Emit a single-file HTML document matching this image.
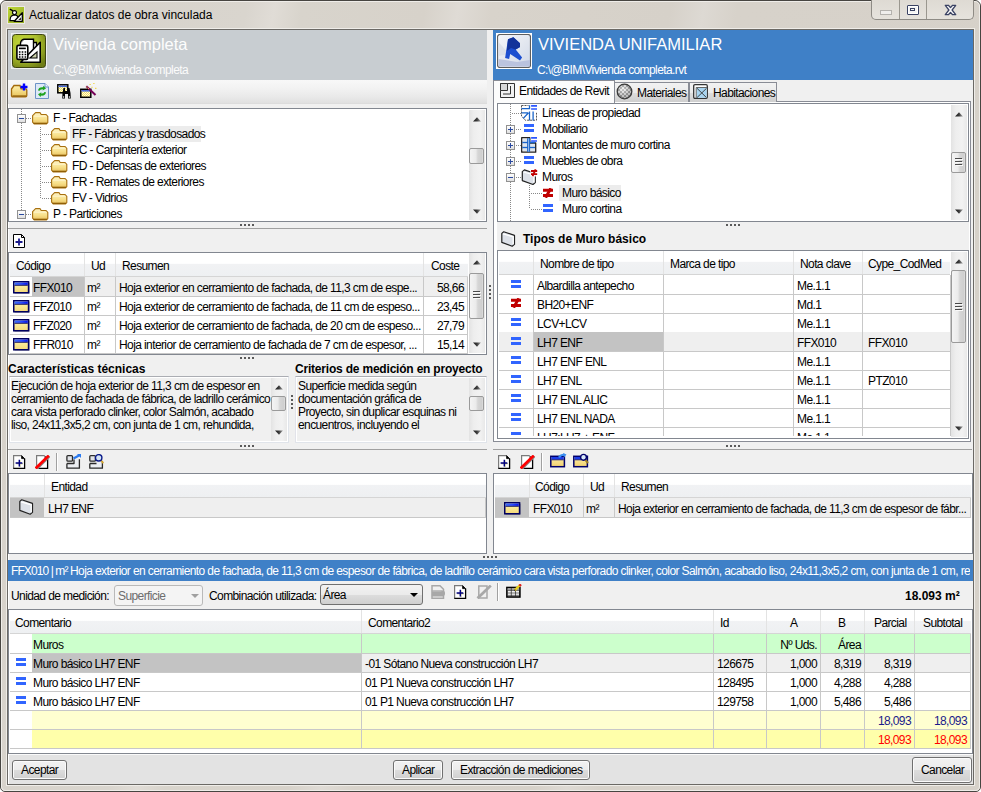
<!DOCTYPE html>
<html><head><meta charset="utf-8">
<style>
*{box-sizing:border-box;margin:0;padding:0}
html,body{width:981px;height:792px;overflow:hidden;background:#fff}
body{font-family:"Liberation Sans",sans-serif;font-size:12px;color:#000;position:relative;letter-spacing:-0.6px;line-height:14px}
.a{position:absolute}
.t{position:absolute;white-space:pre;line-height:14px;height:14px}
.b{font-weight:bold;letter-spacing:-0.15px}
.r{text-align:right}
.box{position:absolute;background:#fff;border:1px solid #828790}
.hl{position:absolute;height:1px}
.vl{position:absolute;width:1px}
.gh{position:absolute;background:linear-gradient(#fff 0,#fff 45%,#f1f2f4 50%,#eef0f2 100%)}
.sb{position:absolute;background:linear-gradient(90deg,#e3e3e3,#eeeeee 30%,#f2f2f2 70%,#e8e8e8)}
.th{position:absolute;border:1px solid #9a9a9a;border-radius:2px;background:linear-gradient(90deg,#f4f4f4,#ebebeb 45%,#d6d6d6 60%,#cfcfcf 90%,#e0e0e0)}
.up{position:absolute;width:0;height:0;border-left:4px solid transparent;border-right:4px solid transparent;border-bottom:4px solid #404040}
.dn{position:absolute;width:0;height:0;border-left:4px solid transparent;border-right:4px solid transparent;border-top:4px solid #404040}
.dots{position:absolute;height:2px;background:repeating-linear-gradient(90deg,#5a5a5a 0 2px,transparent 2px 4px)}
.vdots{position:absolute;width:2px;background:repeating-linear-gradient(#5a5a5a 0 2px,transparent 2px 4px)}
.btn{position:absolute;border:1px solid #707070;border-radius:3px;background:linear-gradient(#f2f2f2 0,#ebebeb 50%,#dddddd 51%,#cfcfcf 100%);box-shadow:inset 0 0 0 1px #fbfbfb}
.eq{position:absolute;width:10px;height:8px;border-top:3px solid #3165ff;border-bottom:3px solid #3165ff}
</style></head><body>
<!-- window frame -->
<div class="a" style="left:0;top:0;width:981px;height:792px;border:1px solid #474541;border-radius:6px 6px 5px 5px;background:#d7d2cb"></div>
<div class="a" style="left:1px;top:1px;width:979px;height:790px;border:1px solid #efede9;border-radius:5px 5px 4px 4px;background:linear-gradient(100deg,#d6d1c9 0,#d9d5ce 22%,#e0dcd6 24.5%,#d8d4cc 27%,#d7d2ca 38%,#dfdbd5 41%,#d8d3cb 44%,#d6d1c9 60%,#ddd9d3 63%,#d7d2ca 66%,#d6d1c9 100%)"></div>
<div class="t" style="left:29px;top:8px;letter-spacing:0;color:#000">Actualizar datos de obra vinculada</div>
<div class="a" style="left:6px;top:28px;width:969px;height:758px;border:1px solid #efede9"></div><div class="a" style="left:7px;top:29px;width:967px;height:756px;background:#f0f0f0;border:1px solid #6b6965"></div><div class="a" style="left:8px;top:30px;width:965px;height:754px;border-left:1px solid #fff;border-bottom:1px solid #fff"></div>
<!-- caption buttons -->
<div class="a" style="left:871px;top:0;width:103px;height:20px;border:1px solid #8e8b85;border-top:none;border-radius:0 0 5px 5px;background:linear-gradient(#dedad3,#e6e3dd)"></div>
<div class="vl" style="left:899px;top:0;height:19px;background:#9a978f"></div>
<div class="vl" style="left:926px;top:0;height:19px;background:#9a978f"></div>
<div class="a" style="left:880px;top:10px;width:12px;height:5px;border:1px solid #b4b2ae;background:#efeeec"></div>
<div class="a" style="left:907px;top:5px;width:12px;height:10px;border:1.5px solid #3a4263;border-radius:1px;background:#f4f4f4;box-shadow:inset 0 0 0 1px #fff"><div class="a" style="left:2px;top:2px;width:5px;height:3px;border:1.3px solid #3a4263"></div></div>
<svg class="a" style="left:944px;top:4px" width="13" height="12" viewBox="0 0 13 12"><path d="M1.3 1.3 H4.4 L6.5 3.6 L8.6 1.3 H11.7 L8.1 6 L11.7 10.7 H8.6 L6.5 8.4 L4.4 10.7 H1.3 L4.9 6Z" fill="#fafafa" stroke="#3a4263" stroke-width="1.3" stroke-linejoin="round"/></svg>
<!-- title icon -->
<div class="a" style="left:7px;top:6px;width:18px;height:18px;border:1px solid #ebe8e3"></div><svg class="a" style="left:8px;top:7px" width="16" height="16" viewBox="0 0 16 16"><defs><linearGradient id="tg" x1="0" y1="0" x2="1" y2="1"><stop offset="0" stop-color="#c0d83a"/><stop offset="1" stop-color="#93aa22"/></linearGradient></defs><rect x="0" y="0" width="16" height="16" fill="url(#tg)"/><path d="M1.8 2.2 L5 3.8" stroke="#000" stroke-width="1.3"/><path d="M2 13.6 L2.4 10.6 Q3 8.4 5.5 8.1 L7.8 8.1 Q9.4 8.5 9.8 10.2 L8.6 13.6Z" fill="#fff" stroke="#000" stroke-width="1.1"/><circle cx="6.5" cy="5.6" r="2" fill="#fff" stroke="#000" stroke-width="1.1"/><path d="M14.3 5.8 L14.3 14.3 L6.2 14.3Z" fill="#fff" stroke="#000" stroke-width="1.3" stroke-linejoin="round"/><path d="M13 10.2 L13 13 L10.2 13Z" fill="#333"/></svg>

<!-- LEFT HEADER -->
<div class="a" style="left:8px;top:30px;width:479px;height:50px;background:#c8cdd1"></div>
<div class="a" style="left:11px;top:33px;width:36px;height:36px;border:1px solid #eef0f2;background:#d3d8db"></div>
<svg class="a" style="left:12px;top:34px" width="34" height="34" viewBox="0 0 34 34">
<defs><radialGradient id="lg1" cx="0.35" cy="0.3" r="0.8"><stop offset="0" stop-color="#c8dc3c"/><stop offset="0.55" stop-color="#a9bd2c"/><stop offset="1" stop-color="#6f7d16"/></radialGradient></defs>
<rect x="0.5" y="0.5" width="33" height="33" rx="3" fill="url(#lg1)" stroke="#3d4410"/>
<path d="M11 8.5 L24.5 8.5 L24.5 25 L11 25Z" fill="#f2f2f2" stroke="#000" stroke-width="1.3"/>
<path d="M8.5 9 Q9 6 12 5.3 L21.5 5.3 L21.5 24 L8.5 24Z" fill="#fff" stroke="#000" stroke-width="1.4"/>
<path d="M11 6.5 Q10 7 9.8 8.5" stroke="#888" stroke-width="0.8" fill="none"/>
<path d="M28.2 8.3 L28.2 28.2 L8.7 28.2Z" fill="#fff" stroke="#000" stroke-width="1.6" stroke-linejoin="round"/>
<path d="M17.9 24 L25 17.9 L25 24Z" fill="#c9cfa8" stroke="#000" stroke-width="1.1"/>
<rect x="4.9" y="11.4" width="10.9" height="14" rx="1.5" fill="#fff" stroke="#000" stroke-width="1.6"/>
<rect x="7" y="13.6" width="6.8" height="1.6" fill="#000"/>
<path d="M6.9 18h1.6M9.7 18h1.6M12.6 18h1.6M6.9 20.6h1.6M9.7 20.6h1.6M12.6 20.6h1.6M6.9 23h1.6M9.7 23h1.6M12.6 23h1.6" stroke="#000" stroke-width="1.5"/>
</svg>
<div class="t" style="left:53px;top:34px;font-size:16.5px;line-height:20px;height:20px;letter-spacing:0;color:#fdfdfd">Vivienda completa</div>
<div class="t" style="left:53px;top:63px;color:#fbfbfb">C:\@BIM\Vivienda completa</div>

<!-- RIGHT HEADER -->
<div class="a" style="left:493px;top:30px;width:480px;height:50px;background:#3f80c7"></div>
<div class="a" style="left:496px;top:33px;width:36px;height:36px;background:#fff"></div>
<svg class="a" style="left:497px;top:34px" width="34" height="34" viewBox="0 0 34 34">
<defs><linearGradient id="rg1" x1="0" y1="0" x2="1" y2="1"><stop offset="0" stop-color="#f4f6fa"/><stop offset="0.5" stop-color="#e4e8f0"/><stop offset="1" stop-color="#d0d8e8"/></linearGradient></defs>
<rect x="0.5" y="0.5" width="33" height="33" rx="2.5" fill="url(#rg1)" stroke="#5f5f5f" stroke-width="1.2"/>
<path d="M1.5 25 L20 28 L33 26 L33 32.5 L1.5 32.5Z" fill="#b4bddc" opacity="0.85"/>
<path d="M1.5 8 L12 20 L1.5 22Z" fill="#d6dbe6" opacity="0.7"/>
<path d="M11 5.3 L16.4 3.2 L23 9.3 L23 13 L18.7 15.6 L25.1 23.6 L23 26.5 L13.2 20.1 L12.1 24.9 L8.1 24.1Z" fill="#1d4fd0"/>
<path d="M11 5.3 L16.4 3.2 L23 9.3 L23 13 L18.7 15.6 L14 14 L9.8 17Z" fill="#13339a"/>
</svg>
<div class="t" style="left:538px;top:34px;font-size:16.5px;line-height:20px;height:20px;letter-spacing:0;color:#fff">VIVIENDA UNIFAMILIAR</div>
<div class="t" style="left:537px;top:63px;color:#fff">C:\@BIM\Vivienda completa.rvt</div>
<!-- LEFT TOOLBAR -->
<div class="a" style="left:8px;top:80px;width:479px;height:24px;background:linear-gradient(#f8f8f8,#f2f2f2 35%,#e9e9e9 70%,#dedede 100%)"></div>
<div class="hl" style="left:8px;top:103px;width:479px;background:#dcdcdc"></div>
<!-- folder + -->
<svg class="a" style="left:10px;top:83px" width="18" height="15" viewBox="0 0 18 15">
<defs><linearGradient id="fg1" x1="0" y1="0" x2="0" y2="1"><stop offset="0" stop-color="#fff2b0"/><stop offset="1" stop-color="#e9c45a"/></linearGradient></defs>
<path d="M1.5 6 L4 2.5 L10 2.5 L11 5.8 L15.5 5.8 Q16.8 5.8 16.8 7 L16.8 12.5 Q16.8 13.8 15.5 13.8 L2.8 13.8 Q1.5 13.8 1.5 12.5Z" fill="url(#fg1)" stroke="#a46b0c" stroke-width="1.3"/>
<path d="M2.5 13 H16" stroke="#8a5a08" stroke-width="1.2"/>
<path d="M14 0.5 V7.5 M10.5 4 H17.5" stroke="#0000ff" stroke-width="2.4"/>
</svg>
<!-- refresh doc -->
<svg class="a" style="left:35px;top:83px" width="14" height="16" viewBox="0 0 14 16">
<path d="M0.5 0.5 H10 L13.5 4 V15.5 H0.5Z" fill="#dde9f7" stroke="#6d93c6"/>
<path d="M10 0.5 V4 H13.5" fill="#f4f8fd" stroke="#6d93c6"/>
<path d="M3 7.5 Q3.5 3.8 8 4.2 L8.5 2.8 L11 5.6 L7.6 7.6 L7.9 6.2 Q5 6 4.6 7.8Z" fill="#1ea31e"/>
<path d="M11 9.2 Q10.5 13 6 12.6 L5.5 14 L3 11.2 L6.4 9.2 L6.1 10.6 Q9 10.8 9.4 9Z" fill="#1ea31e"/>
</svg>
<!-- binoculars window -->
<svg class="a" style="left:57px;top:84px" width="17" height="15" viewBox="0 0 17 15">
<defs><pattern id="chk" width="2" height="2" patternUnits="userSpaceOnUse"><rect width="2" height="2" fill="#fffbe0"/><rect width="1" height="1" fill="#f4e060"/><rect x="1" y="1" width="1" height="1" fill="#f4e060"/></pattern></defs>
<rect x="0.8" y="0.8" width="10" height="8" fill="url(#chk)" stroke="#000" stroke-width="1.5"/>
<rect x="1.5" y="1.5" width="8.6" height="1.6" fill="#4a6ad8"/>
<path d="M5.5 9 L6.5 4 L8 4 L8 14.5 L5.2 14.5Z M13.5 9 L12.5 4 L11 4 L11 14.5 L13.8 14.5Z M8 7 H11 V10 H8Z" fill="#000"/>
<circle cx="6.6" cy="13" r="0.8" fill="#fff"/><circle cx="12.4" cy="13" r="0.8" fill="#fff"/>
</svg>
<!-- window + wand -->
<svg class="a" style="left:80px;top:82px" width="17" height="16" viewBox="0 0 17 16">
<rect x="0.8" y="7.3" width="10" height="8" fill="url(#chk)" stroke="#000" stroke-width="1.5"/>
<rect x="1.5" y="8" width="8.6" height="1.6" fill="#4a6ad8"/>
<path d="M6.3 4.3 L15.5 13" stroke="#760058" stroke-width="2"/>
<circle cx="7" cy="5" r="0.6" fill="#f8e040"/><circle cx="8.4" cy="6.3" r="0.6" fill="#f8e040"/>
<path d="M9.6 2.5 h1 M10.1 2 v1 M13.4 1.5 h1 M13.9 1 v1 M11.5 5.3 h1 M12 4.8 v1 M15.3 6.4 h1 M15.8 5.9 v1" stroke="#f0d020" stroke-width="1.1"/>
</svg>
<svg width="0" height="0" style="position:absolute"><defs><linearGradient id="fdg" x1="0" y1="0" x2="0" y2="1"><stop offset="0" stop-color="#fff6c8"/><stop offset="0.6" stop-color="#f7df88"/><stop offset="1" stop-color="#e8c060"/></linearGradient></defs></svg>
<!-- LEFT TREE -->
<div class="box" style="left:8px;top:108px;width:479px;height:114px"></div>

<!-- tree lines -->
<div class="vdots" style="left:21px;top:109px;width:1px;height:105px;background:repeating-linear-gradient(#888 0 1px,transparent 1px 2px)"></div>
<div class="vdots" style="left:40px;top:127px;width:1px;height:71px;background:repeating-linear-gradient(#888 0 1px,transparent 1px 2px)"></div>
<div class="dots" style="left:26px;top:118px;width:6px;height:1px;background:repeating-linear-gradient(90deg,#888 0 1px,transparent 1px 2px)"></div>
<div class="dots" style="left:26px;top:214px;width:6px;height:1px;background:repeating-linear-gradient(90deg,#888 0 1px,transparent 1px 2px)"></div>
<div class="dots" style="left:42px;top:134px;width:9px;height:1px;background:repeating-linear-gradient(90deg,#888 0 1px,transparent 1px 2px)"></div>
<div class="dots" style="left:42px;top:150px;width:9px;height:1px;background:repeating-linear-gradient(90deg,#888 0 1px,transparent 1px 2px)"></div>
<div class="dots" style="left:42px;top:166px;width:9px;height:1px;background:repeating-linear-gradient(90deg,#888 0 1px,transparent 1px 2px)"></div>
<div class="dots" style="left:42px;top:182px;width:9px;height:1px;background:repeating-linear-gradient(90deg,#888 0 1px,transparent 1px 2px)"></div>
<div class="dots" style="left:42px;top:198px;width:9px;height:1px;background:repeating-linear-gradient(90deg,#888 0 1px,transparent 1px 2px)"></div>
<div class="a" style="left:17px;top:114px;width:9px;height:9px;border:1px solid #919191;background:linear-gradient(#fff,#e0e0e0)"><div class="a" style="left:1px;top:3px;width:5px;height:1px;background:#2a4aa0"></div></div>
<div class="a" style="left:17px;top:210px;width:9px;height:9px;border:1px solid #919191;background:linear-gradient(#fff,#e0e0e0)"><div class="a" style="left:1px;top:3px;width:5px;height:1px;background:#2a4aa0"></div></div>
<div class="a" style="left:70px;top:126px;width:131px;height:16px;background:#ececec"></div>
<svg class="a" style="left:32px;top:112px" width="17" height="13" viewBox="0 0 17 13"><path d="M3.6 0.6 H8 L9.2 2.5 H13.9 L15.8 4.3 V10.6 L14.5 12 H2.2 L0.6 10.2 V3.6Z" fill="url(#fdg)" stroke="#a87010" stroke-width="1.1" stroke-linejoin="round"/><path d="M1.5 11.3 H15" stroke="#8a5800" stroke-width="1.2"/><path d="M2 4.2 H14.8" stroke="#fff8d8" stroke-width="0.8"/></svg>
<div class="t" style="left:53px;top:111px">F - Fachadas</div>
<svg class="a" style="left:51px;top:128px" width="17" height="13" viewBox="0 0 17 13"><path d="M3.6 0.6 H8 L9.2 2.5 H13.9 L15.8 4.3 V10.6 L14.5 12 H2.2 L0.6 10.2 V3.6Z" fill="url(#fdg)" stroke="#a87010" stroke-width="1.1" stroke-linejoin="round"/><path d="M1.5 11.3 H15" stroke="#8a5800" stroke-width="1.2"/><path d="M2 4.2 H14.8" stroke="#fff8d8" stroke-width="0.8"/></svg>
<div class="t" style="left:72px;top:127px">FF - Fábricas y trasdosados</div>
<svg class="a" style="left:51px;top:144px" width="17" height="13" viewBox="0 0 17 13"><path d="M3.6 0.6 H8 L9.2 2.5 H13.9 L15.8 4.3 V10.6 L14.5 12 H2.2 L0.6 10.2 V3.6Z" fill="url(#fdg)" stroke="#a87010" stroke-width="1.1" stroke-linejoin="round"/><path d="M1.5 11.3 H15" stroke="#8a5800" stroke-width="1.2"/><path d="M2 4.2 H14.8" stroke="#fff8d8" stroke-width="0.8"/></svg>
<div class="t" style="left:72px;top:143px">FC - Carpintería exterior</div>
<svg class="a" style="left:51px;top:160px" width="17" height="13" viewBox="0 0 17 13"><path d="M3.6 0.6 H8 L9.2 2.5 H13.9 L15.8 4.3 V10.6 L14.5 12 H2.2 L0.6 10.2 V3.6Z" fill="url(#fdg)" stroke="#a87010" stroke-width="1.1" stroke-linejoin="round"/><path d="M1.5 11.3 H15" stroke="#8a5800" stroke-width="1.2"/><path d="M2 4.2 H14.8" stroke="#fff8d8" stroke-width="0.8"/></svg>
<div class="t" style="left:72px;top:159px">FD - Defensas de exteriores</div>
<svg class="a" style="left:51px;top:176px" width="17" height="13" viewBox="0 0 17 13"><path d="M3.6 0.6 H8 L9.2 2.5 H13.9 L15.8 4.3 V10.6 L14.5 12 H2.2 L0.6 10.2 V3.6Z" fill="url(#fdg)" stroke="#a87010" stroke-width="1.1" stroke-linejoin="round"/><path d="M1.5 11.3 H15" stroke="#8a5800" stroke-width="1.2"/><path d="M2 4.2 H14.8" stroke="#fff8d8" stroke-width="0.8"/></svg>
<div class="t" style="left:72px;top:175px">FR - Remates de exteriores</div>
<svg class="a" style="left:51px;top:192px" width="17" height="13" viewBox="0 0 17 13"><path d="M3.6 0.6 H8 L9.2 2.5 H13.9 L15.8 4.3 V10.6 L14.5 12 H2.2 L0.6 10.2 V3.6Z" fill="url(#fdg)" stroke="#a87010" stroke-width="1.1" stroke-linejoin="round"/><path d="M1.5 11.3 H15" stroke="#8a5800" stroke-width="1.2"/><path d="M2 4.2 H14.8" stroke="#fff8d8" stroke-width="0.8"/></svg>
<div class="t" style="left:72px;top:191px">FV - Vidrios</div>
<svg class="a" style="left:32px;top:208px" width="17" height="13" viewBox="0 0 17 13"><path d="M3.6 0.6 H8 L9.2 2.5 H13.9 L15.8 4.3 V10.6 L14.5 12 H2.2 L0.6 10.2 V3.6Z" fill="url(#fdg)" stroke="#a87010" stroke-width="1.1" stroke-linejoin="round"/><path d="M1.5 11.3 H15" stroke="#8a5800" stroke-width="1.2"/><path d="M2 4.2 H14.8" stroke="#fff8d8" stroke-width="0.8"/></svg>
<div class="t" style="left:53px;top:207px">P - Particiones</div>
<!-- splitter 1 -->
<div class="dots" style="left:240px;top:224px;width:15px;height:2px"></div>
<div class="hl" style="left:8px;top:228px;width:479px;background:#a0a0a0"></div>
<!-- + doc icon -->
<svg class="a" style="left:13px;top:234px" width="13" height="14" viewBox="0 0 13 14"><path d="M0.5 0.5 H8.5 L11.5 3.5 V13.5 H0.5Z" fill="#fff" stroke="#000"/><path d="M8.5 0.5 V3.5 H11.5" fill="none" stroke="#000"/><path d="M2.5 8 H9.5 M6 4.5 V11.5" stroke="#1a1a8c" stroke-width="1.8"/></svg>


<svg width="0" height="0" style="position:absolute"><defs><linearGradient id="yw" x1="0" y1="0" x2="0" y2="1"><stop offset="0" stop-color="#fff7b0"/><stop offset="1" stop-color="#f4d878"/></linearGradient><linearGradient id="bw" x1="0" y1="0" x2="1" y2="0"><stop offset="0" stop-color="#3a6aff"/><stop offset="0.5" stop-color="#2a4aff"/><stop offset="1" stop-color="#0010f0"/></linearGradient></defs></svg>
<svg width="0" height="0" style="position:absolute"><defs><linearGradient id="arr" x1="0" y1="0" x2="1" y2="0"><stop offset="0" stop-color="#1a1a1a"/><stop offset="0.5" stop-color="#3a3a3a"/><stop offset="1" stop-color="#a8a8a8"/></linearGradient></defs></svg>
<div class="sb" style="left:469px;top:110px;width:16px;height:110px"></div>
<svg class="a" style="left:473px;top:117px" width="8" height="5" viewBox="0 0 8 5"><path d="M0 4.5 L4 0.3 L8 4.5Z" fill="url(#arr)"/></svg>
<svg class="a" style="left:473px;top:209px" width="8" height="5" viewBox="0 0 8 5"><path d="M0 0.5 L4 4.7 L8 0.5Z" fill="url(#arr)"/></svg>
<div class="th" style="left:469px;top:148px;width:15px;height:16px"></div>
<div class="box" style="left:8px;top:252px;width:479px;height:103px"></div>
<div class="gh" style="left:10px;top:253px;width:458px;height:23px"></div>
<div class="hl" style="left:10px;top:276px;width:458px;background:#d5d5d5"></div>
<div class="vl" style="left:84px;top:253px;height:23px;background:#e3e3e3"></div>
<div class="vl" style="left:115px;top:253px;height:23px;background:#e3e3e3"></div>
<div class="vl" style="left:423px;top:253px;height:23px;background:#e3e3e3"></div>
<div class="t" style="left:16px;top:259px;">Código</div>
<div class="t" style="left:91px;top:259px;">Ud</div>
<div class="t" style="left:122px;top:259px;">Resumen</div>
<div class="t" style="left:431px;top:259px;">Coste</div>
<div class="a" style="left:32px;top:277px;width:436px;height:19px;background:#efefef;"></div>
<div class="a" style="left:32px;top:277px;width:52px;height:19px;background:#c3c3c3;"></div>
<div class="hl" style="left:10px;top:296px;width:458px;background:#c8c8c8"></div>
<svg class="a" style="left:13px;top:281px" width="17" height="13" viewBox="0 0 17 13"><rect x="1.5" y="1.5" width="15" height="11" fill="#1a1a40" opacity="0.6"/><rect x="0.75" y="0.75" width="14.8" height="11" fill="url(#yw)" stroke="#000060" stroke-width="1.5"/><rect x="1.5" y="1.5" width="13.3" height="2.4" fill="url(#bw)"/><path d="M1.5 4.3 H14.8" stroke="#000060" stroke-width="0.9"/></svg>
<div class="t" style="left:33px;top:281px;">FFX010</div>
<div class="t" style="left:87px;top:281px;">m²</div>
<div class="t" style="left:119px;top:281px;">Hoja exterior en cerramiento de fachada, de 11,3 cm de espe...</div>
<div class="t r" style="left:344px;width:120px;top:281px;">58,66</div>
<div class="hl" style="left:10px;top:315px;width:458px;background:#c8c8c8"></div>
<svg class="a" style="left:13px;top:300px" width="17" height="13" viewBox="0 0 17 13"><rect x="1.5" y="1.5" width="15" height="11" fill="#1a1a40" opacity="0.6"/><rect x="0.75" y="0.75" width="14.8" height="11" fill="url(#yw)" stroke="#000060" stroke-width="1.5"/><rect x="1.5" y="1.5" width="13.3" height="2.4" fill="url(#bw)"/><path d="M1.5 4.3 H14.8" stroke="#000060" stroke-width="0.9"/></svg>
<div class="t" style="left:33px;top:300px;">FFZ010</div>
<div class="t" style="left:87px;top:300px;">m²</div>
<div class="t" style="left:119px;top:300px;">Hoja exterior de cerramiento de fachada, de 11 cm de espeso...</div>
<div class="t r" style="left:344px;width:120px;top:300px;">23,45</div>
<div class="hl" style="left:10px;top:334px;width:458px;background:#c8c8c8"></div>
<svg class="a" style="left:13px;top:319px" width="17" height="13" viewBox="0 0 17 13"><rect x="1.5" y="1.5" width="15" height="11" fill="#1a1a40" opacity="0.6"/><rect x="0.75" y="0.75" width="14.8" height="11" fill="url(#yw)" stroke="#000060" stroke-width="1.5"/><rect x="1.5" y="1.5" width="13.3" height="2.4" fill="url(#bw)"/><path d="M1.5 4.3 H14.8" stroke="#000060" stroke-width="0.9"/></svg>
<div class="t" style="left:33px;top:319px;">FFZ020</div>
<div class="t" style="left:87px;top:319px;">m²</div>
<div class="t" style="left:119px;top:319px;">Hoja exterior de cerramiento de fachada, de 20 cm de espeso...</div>
<div class="t r" style="left:344px;width:120px;top:319px;">27,79</div>
<div class="hl" style="left:10px;top:353px;width:458px;background:#c8c8c8"></div>
<svg class="a" style="left:13px;top:338px" width="17" height="13" viewBox="0 0 17 13"><rect x="1.5" y="1.5" width="15" height="11" fill="#1a1a40" opacity="0.6"/><rect x="0.75" y="0.75" width="14.8" height="11" fill="url(#yw)" stroke="#000060" stroke-width="1.5"/><rect x="1.5" y="1.5" width="13.3" height="2.4" fill="url(#bw)"/><path d="M1.5 4.3 H14.8" stroke="#000060" stroke-width="0.9"/></svg>
<div class="t" style="left:33px;top:338px;">FFR010</div>
<div class="t" style="left:87px;top:338px;">m²</div>
<div class="t" style="left:119px;top:338px;">Hoja interior de cerramiento de fachada de 7 cm de espesor, ...</div>
<div class="t r" style="left:344px;width:120px;top:338px;">15,14</div>
<div class="vl" style="left:84px;top:277px;height:76px;background:#c8c8c8"></div>
<div class="vl" style="left:115px;top:277px;height:76px;background:#c8c8c8"></div>
<div class="vl" style="left:423px;top:277px;height:76px;background:#c8c8c8"></div>
<div class="vl" style="left:467px;top:277px;height:76px;background:#c8c8c8"></div>
<div class="sb" style="left:469px;top:253px;width:16px;height:100px"></div>
<svg class="a" style="left:473px;top:260px" width="8" height="5" viewBox="0 0 8 5"><path d="M0 4.5 L4 0.3 L8 4.5Z" fill="url(#arr)"/></svg>
<svg class="a" style="left:473px;top:342px" width="8" height="5" viewBox="0 0 8 5"><path d="M0 0.5 L4 4.7 L8 0.5Z" fill="url(#arr)"/></svg>
<div class="th" style="left:469px;top:273px;width:15px;height:46px"></div>
<div class="hl" style="left:473px;top:291px;width:7px;background:#4a4a4a"></div>
<div class="hl" style="left:474px;top:292px;width:7px;background:#fafafa"></div>
<div class="hl" style="left:473px;top:294px;width:7px;background:#4a4a4a"></div>
<div class="hl" style="left:474px;top:295px;width:7px;background:#fafafa"></div>
<div class="hl" style="left:473px;top:297px;width:7px;background:#4a4a4a"></div>
<div class="hl" style="left:474px;top:298px;width:7px;background:#fafafa"></div>
<div class="dots" style="left:240px;top:357px;width:15px;height:2px"></div>
<div class="vdots" style="left:489px;top:285px;height:14px"></div>
<div class="t" style="left:8px;top:362px;font-weight:bold;letter-spacing:0px">Características técnicas</div>
<div class="t" style="left:295px;top:362px;font-weight:bold;letter-spacing:-0.2px">Criterios de medición en proyecto</div>
<div class="a" style="left:9px;top:376px;width:280px;height:67px;border:1px solid #e0e4ea;border-top-color:#abadb3;border-left-color:#e2e3ea;background:#f0f0f0;box-shadow:inset 0 0 0 1px #fff"></div>
<div class="a" style="left:295px;top:376px;width:192px;height:67px;border:1px solid #e0e4ea;border-top-color:#abadb3;border-left-color:#e2e3ea;background:#f0f0f0;box-shadow:inset 0 0 0 1px #fff"></div>
<div class="a" style="left:10px;top:377px;width:261px;height:64px;overflow:hidden">
<div class="t" style="left:1px;top:2px;">Ejecución de hoja exterior de 11,3 cm de espesor en</div>
<div class="t" style="left:1px;top:15px;">cerramiento de fachada de fábrica, de ladrillo cerámico</div>
<div class="t" style="left:1px;top:28px;">cara vista perforado clinker, color Salmón, acabado</div>
<div class="t" style="left:1px;top:41px;">liso, 24x11,3x5,2 cm, con junta de 1 cm, rehundida,</div>
</div>
<div class="t" style="left:298px;top:379px;">Superficie medida según</div>
<div class="t" style="left:298px;top:392px;">documentación gráfica de</div>
<div class="t" style="left:298px;top:405px;">Proyecto, sin duplicar esquinas ni</div>
<div class="t" style="left:298px;top:418px;">encuentros, incluyendo el</div>
<div class="sb" style="left:271px;top:378px;width:16px;height:63px"></div>
<svg class="a" style="left:275px;top:385px" width="8" height="5" viewBox="0 0 8 5"><path d="M0 4.5 L4 0.3 L8 4.5Z" fill="url(#arr)"/></svg>
<svg class="a" style="left:275px;top:430px" width="8" height="5" viewBox="0 0 8 5"><path d="M0 0.5 L4 4.7 L8 0.5Z" fill="url(#arr)"/></svg>
<div class="th" style="left:271px;top:396px;width:15px;height:15px"></div>
<div class="sb" style="left:469px;top:378px;width:16px;height:63px"></div>
<svg class="a" style="left:473px;top:385px" width="8" height="5" viewBox="0 0 8 5"><path d="M0 4.5 L4 0.3 L8 4.5Z" fill="url(#arr)"/></svg>
<svg class="a" style="left:473px;top:430px" width="8" height="5" viewBox="0 0 8 5"><path d="M0 0.5 L4 4.7 L8 0.5Z" fill="url(#arr)"/></svg>
<div class="th" style="left:469px;top:396px;width:15px;height:15px"></div>
<div class="vdots" style="left:291px;top:395px;height:14px"></div>
<div class="dots" style="left:240px;top:445px;width:15px;height:2px"></div>
<div class="hl" style="left:8px;top:449px;width:479px;background:#a0a0a0"></div>
<svg class="a" style="left:13px;top:455px" width="13" height="14" viewBox="0 0 13 14"><path d="M0.6 0.6 H8.6 L11.6 3.6 V13.4 H0.6Z" fill="#fff"/><path d="M0.6 13.4 V0.6 H8.6" stroke="#7a7a7a" stroke-width="1.2" fill="none"/><path d="M8.6 0.6 V3.6 H11.6Z" fill="#000" stroke="#000" stroke-width="0.8"/><path d="M11.6 3.6 V13.4 H0.3" stroke="#000" stroke-width="1.3" fill="none"/><path d="M3.3 8.6 H10 M7 5.3 V12" stroke="#b8b890" stroke-width="1.2"/><path d="M2.6 8 H9.3 M6.3 4.7 V11.4" stroke="#000080" stroke-width="1.4"/></svg>
<svg class="a" style="left:35px;top:455px" width="15" height="14" viewBox="0 0 15 14"><path d="M1.6 0.6 H9.6 L12.6 3.6 V13.4 H1.6Z" fill="#fff"/><path d="M1.6 13.4 V0.6 H9.6" stroke="#7a7a7a" stroke-width="1.2" fill="none"/><path d="M9.6 0.6 V3.6 H12.6Z" fill="#000"/><path d="M12.6 3.6 V13.4 H1.3" stroke="#000" stroke-width="1.3" fill="none"/><path d="M14.3 1.2 L1.5 14" stroke="#888" stroke-width="2.8"/><path d="M13.8 0.6 L0.6 13.4" stroke="#ff0000" stroke-width="2.8"/></svg>
<div class="vl" style="left:56px;top:453px;height:18px;background:#a0a0a0"></div>
<div class="vl" style="left:57px;top:453px;height:18px;background:#fff"></div>
<svg class="a" style="left:66px;top:454px" width="16" height="16" viewBox="0 0 16 16"><rect x="0.9" y="1.6" width="5.6" height="5.6" rx="1" fill="#e2e4e8" stroke="#2a2a2a" stroke-width="1.3"/><path d="M0.9 9.5 H8 V5.2 H13.4 V14.2 H0.9Z" fill="#eceef2"/><path d="M0.9 9.5 H8 V5.5 M13.4 5.2 V14.2 H0.9 V9.5" fill="none" stroke="#2a2a2a" stroke-width="1.3" stroke-linejoin="round"/><path d="M7.5 4.5 L13.5 1.2" stroke="#2a7af0" stroke-width="2.2"/><path d="M11 0 L15 0 L15 4Z" fill="#2a7af0"/></svg>
<svg class="a" style="left:89px;top:454px" width="16" height="16" viewBox="0 0 16 16"><rect x="0.8" y="1.6" width="5.6" height="5.6" rx="1" fill="#e2e4e8" stroke="#2a2a2a" stroke-width="1.3"/><path d="M0.8 9.5 H8 V5.2 H13.4 V14.2 H0.8Z" fill="#eceef2"/><path d="M0.8 9.5 H7.5 M13.4 7 V14.2 H0.8 V9.5" fill="none" stroke="#2a2a2a" stroke-width="1.3" stroke-linejoin="round"/><path d="M11.8 6 L14.3 9.3" stroke="#d8a830" stroke-width="1.8"/><circle cx="9.7" cy="3.8" r="3.2" fill="#d4e4f4" stroke="#0a1a8a" stroke-width="1.4"/></svg>
<div class="box" style="left:8px;top:473px;width:479px;height:81px"></div>
<div class="gh" style="left:10px;top:474px;width:476px;height:23px"></div>
<div class="hl" style="left:10px;top:497px;width:476px;background:#d5d5d5"></div>
<div class="vl" style="left:44px;top:474px;height:23px;background:#e3e3e3"></div>
<div class="t" style="left:51px;top:480px;">Entidad</div>
<div class="a" style="left:10px;top:498px;width:476px;height:19px;background:#efefef;border-right:1px solid #c8c8c8"></div>
<div class="a" style="left:10px;top:498px;width:34px;height:19px;background:#c3c3c3;"></div>
<div class="hl" style="left:10px;top:517px;width:476px;background:#c8c8c8"></div>
<svg class="a" style="left:19px;top:499px" width="15" height="16" viewBox="0 0 15 16"><path d="M0.8 2.4 L2.7 0.8 L13.5 4.4 V13.4 L11.2 15.2 L0.8 11.4Z" fill="#dde1e8" stroke="#222" stroke-width="1.2" stroke-linejoin="round"/><path d="M2 2.8 L12.2 5.8 L12.2 13.2" stroke="#fff" fill="none" stroke-width="1.3"/></svg>
<div class="t" style="left:48px;top:502px;">LH7 ENF</div>
<div class="a" style="left:493px;top:101px;width:478px;height:341px;border:1px solid #898c95;background:#fff"></div>
<div class="a" style="left:497px;top:222px;width:472px;height:28px;background:#f0f0f0;"></div>
<div class="a" style="left:614px;top:82px;width:75px;height:20px;border:1px solid #898c95;border-bottom:none;background:linear-gradient(#f2f2f2,#ebebeb 50%,#dddddd 51%,#cfcfcf)"></div>
<div class="a" style="left:689px;top:82px;width:88px;height:20px;border:1px solid #898c95;border-bottom:none;background:linear-gradient(#f2f2f2,#ebebeb 50%,#dddddd 51%,#cfcfcf)"></div>
<div class="a" style="left:493px;top:80px;width:122px;height:23px;border:1px solid #898c95;border-bottom:none;background:#fcfcfc"></div>
<svg class="a" style="left:500px;top:83px" width="15" height="15" viewBox="0 0 15 15"><path d="M0.5 0.5 H7.5 V7.5 H0.5Z" fill="#d8d8d8" stroke="#333"/><path d="M0.5 7.5 V14.5 H14.5 V0.5 H7.5" fill="#f2f2f2" stroke="#333"/><path d="M0.5 0.5 H7.5 V7.5 H0.5Z" fill="#d8d8d8" stroke="#333"/><path d="M10.5 3 V11 H3" fill="none" stroke="#333"/></svg>
<div class="t" style="left:519px;top:84px;">Entidades de Revit</div>
<svg class="a" style="left:616px;top:83px" width="17" height="17" viewBox="0 0 17 17"><defs><pattern id="chk2" width="4" height="4" patternUnits="userSpaceOnUse"><rect width="4" height="4" fill="#f6f6f6"/><rect width="2" height="2" fill="#9a9a9a"/><rect x="2" y="2" width="2" height="2" fill="#9a9a9a"/></pattern><radialGradient id="sph" cx="0.4" cy="0.35" r="0.7"><stop offset="0" stop-color="#fff" stop-opacity="0.5"/><stop offset="1" stop-color="#333" stop-opacity="0.35"/></radialGradient></defs><circle cx="8.5" cy="8.5" r="7.3" fill="url(#chk2)"/><circle cx="8.5" cy="8.5" r="7.3" fill="url(#sph)" stroke="#3a3a3a" stroke-width="1.3"/></svg>
<div class="t" style="left:637px;top:86px;">Materiales</div>
<svg class="a" style="left:693px;top:84px" width="15" height="15" viewBox="0 0 15 15"><rect x="0.7" y="0.7" width="13.6" height="13.6" rx="1.2" fill="#fff" stroke="#333" stroke-width="1.3"/><rect x="3.5" y="3.8" width="10.2" height="10" fill="#a8d4f0"/><path d="M3.2 3.5 H13.8 M3.2 3.5 V14" stroke="#555" stroke-width="0.9"/><path d="M4 4.3 L13.5 13.6 M13.5 4.3 L4 13.6" stroke="#333" stroke-width="0.9"/></svg>
<div class="t" style="left:713px;top:86px;">Habitaciones</div>
<div class="box" style="left:497px;top:103px;width:472px;height:119px"></div>
<div class="sb" style="left:951px;top:105px;width:16px;height:115px"></div>
<svg class="a" style="left:955px;top:112px" width="8" height="5" viewBox="0 0 8 5"><path d="M0 4.5 L4 0.3 L8 4.5Z" fill="url(#arr)"/></svg>
<svg class="a" style="left:955px;top:209px" width="8" height="5" viewBox="0 0 8 5"><path d="M0 0.5 L4 4.7 L8 0.5Z" fill="url(#arr)"/></svg>
<div class="th" style="left:951px;top:152px;width:15px;height:21px"></div>
<div class="hl" style="left:955px;top:158px;width:7px;background:#4a4a4a"></div>
<div class="hl" style="left:956px;top:159px;width:7px;background:#fafafa"></div>
<div class="hl" style="left:955px;top:161px;width:7px;background:#4a4a4a"></div>
<div class="hl" style="left:956px;top:162px;width:7px;background:#fafafa"></div>
<div class="hl" style="left:955px;top:164px;width:7px;background:#4a4a4a"></div>
<div class="hl" style="left:956px;top:165px;width:7px;background:#fafafa"></div>
<div class="a" style="left:510px;top:104px;width:1px;height:117px;background:repeating-linear-gradient(#888 0 1px,transparent 1px 2px)"></div>
<div class="a" style="left:529px;top:185px;width:1px;height:24px;background:repeating-linear-gradient(#888 0 1px,transparent 1px 2px)"></div>
<div class="a" style="left:512px;top:113px;width:9px;height:1px;background:repeating-linear-gradient(90deg,#888 0 1px,transparent 1px 2px)"></div>
<div class="a" style="left:516px;top:129px;width:5px;height:1px;background:repeating-linear-gradient(90deg,#888 0 1px,transparent 1px 2px)"></div>
<div class="a" style="left:516px;top:145px;width:5px;height:1px;background:repeating-linear-gradient(90deg,#888 0 1px,transparent 1px 2px)"></div>
<div class="a" style="left:516px;top:161px;width:5px;height:1px;background:repeating-linear-gradient(90deg,#888 0 1px,transparent 1px 2px)"></div>
<div class="a" style="left:516px;top:177px;width:5px;height:1px;background:repeating-linear-gradient(90deg,#888 0 1px,transparent 1px 2px)"></div>
<div class="a" style="left:531px;top:193px;width:11px;height:1px;background:repeating-linear-gradient(90deg,#888 0 1px,transparent 1px 2px)"></div>
<div class="a" style="left:531px;top:209px;width:11px;height:1px;background:repeating-linear-gradient(90deg,#888 0 1px,transparent 1px 2px)"></div>
<div class="a" style="left:506px;top:125px;width:9px;height:9px;border:1px solid #919191;background:linear-gradient(#fff,#e0e0e0)"><div class="a" style="left:1px;top:3px;width:5px;height:1px;background:#2a4aa0"></div><div class="a" style="left:3px;top:1px;width:1px;height:5px;background:#2a4aa0"></div></div>
<div class="a" style="left:506px;top:141px;width:9px;height:9px;border:1px solid #919191;background:linear-gradient(#fff,#e0e0e0)"><div class="a" style="left:1px;top:3px;width:5px;height:1px;background:#2a4aa0"></div><div class="a" style="left:3px;top:1px;width:1px;height:5px;background:#2a4aa0"></div></div>
<div class="a" style="left:506px;top:157px;width:9px;height:9px;border:1px solid #919191;background:linear-gradient(#fff,#e0e0e0)"><div class="a" style="left:1px;top:3px;width:5px;height:1px;background:#2a4aa0"></div><div class="a" style="left:3px;top:1px;width:1px;height:5px;background:#2a4aa0"></div></div>
<div class="a" style="left:506px;top:173px;width:9px;height:9px;border:1px solid #919191;background:linear-gradient(#fff,#e0e0e0)"><div class="a" style="left:1px;top:3px;width:5px;height:1px;background:#2a4aa0"></div></div>
<svg class="a" style="left:521px;top:105px" width="17" height="16" viewBox="0 0 17 16"><path d="M0.5 0.5 H7.5 M0.5 0.5 V11 L4.2 15.2 H15.5 V7.8" stroke="#555" stroke-width="1" fill="none" stroke-dasharray="2 1"/><path d="M0.5 3.6 H8.5 V0.3 M0.5 7.8 H6.8 M2.3 13.4 L7.5 7.8 M8.5 6.5 V15.4 M12.1 6.5 V15.4" stroke="#1a64c8" stroke-width="1.3" fill="none"/><path d="M10.1 0.9 H16 M10.1 4 H16" stroke="#2a55ff" stroke-width="1.7"/></svg>
<div class="t" style="left:542px;top:106px;">Líneas de propiedad</div>
<div class="eq" style="left:524px;top:124px"></div>
<div class="t" style="left:542px;top:122px;">Mobiliario</div>
<svg class="a" style="left:521px;top:137px" width="17" height="16" viewBox="0 0 17 16"><path d="M0.7 0.7 H8.8 V6 H14.7 V15.2 H0.7Z" fill="#f4f4f4" stroke="#222" stroke-width="1.3" stroke-linejoin="round"/><path d="M1.3 5.4 H14 M1.3 10.6 H14" stroke="#1a64c8" stroke-width="1.5"/><path d="M1.3 3 H6 M1.3 8 H6 M1.3 13 H6 M9 8 H14 M9 13 H14" stroke="#c8d8e8" stroke-width="1"/><path d="M7.6 1.2 V14.8" stroke="#1a64c8" stroke-width="3"/><path d="M7.6 1.5 V14.5" stroke="#bcd6f0" stroke-width="0.8"/><path d="M10.1 0.9 H16 M10.1 4 H16" stroke="#2a55ff" stroke-width="1.7"/></svg>
<div class="t" style="left:542px;top:138px;">Montantes de muro cortina</div>
<div class="eq" style="left:524px;top:156px"></div>
<div class="t" style="left:542px;top:154px;">Muebles de obra</div>
<svg class="a" style="left:521px;top:169px" width="17" height="17" viewBox="0 0 17 17"><path d="M1.3 2.6 L3.4 0.9 L14.3 4.5 V13.6 L12 15.5 L1.3 11.6Z" fill="#dde1e8" stroke="#222" stroke-width="1.2" stroke-linejoin="round"/><path d="M2.5 3 L12.9 6 L12.9 13.6" stroke="#fff" fill="none" stroke-width="1.3"/><rect x="9.3" y="0" width="7.5" height="7.5" fill="#fff" opacity="0.9"/><path d="M10 2 H16.2 M10 5.2 H16.2" stroke="#c00000" stroke-width="1.8"/><path d="M14.6 0.3 L11.6 7.2" stroke="#c00000" stroke-width="1.8"/></svg>
<div class="t" style="left:542px;top:170px;">Muros</div>
<div class="a" style="left:559px;top:185px;width:62px;height:16px;background:#ececec;"></div>
<svg class="a" style="left:543px;top:188px" width="10" height="10" viewBox="0 0 10 10"><path d="M0 2.3 H10 M0 7.6 H10" stroke="#c00000" stroke-width="3"/><path d="M7.8 0.3 L2.6 9.7" stroke="#c00000" stroke-width="3"/></svg>
<div class="t" style="left:562px;top:186px;">Muro básico</div>
<div class="eq" style="left:543px;top:204px"></div>
<div class="t" style="left:562px;top:202px;">Muro cortina</div>
<div class="dots" style="left:726px;top:224px;width:15px;height:2px"></div>
<svg class="a" style="left:501px;top:231px" width="15" height="16" viewBox="0 0 15 16"><path d="M0.8 2.4 L2.7 0.8 L13.5 4.4 V13.4 L11.2 15.2 L0.8 11.4Z" fill="#dde1e8" stroke="#222" stroke-width="1.2" stroke-linejoin="round"/><path d="M2 2.8 L12.2 5.8 L12.2 13.2" stroke="#fff" fill="none" stroke-width="1.3"/></svg>
<div class="t" style="left:523px;top:232px;font-weight:bold;letter-spacing:0px">Tipos de Muro básico</div>
<div class="box" style="left:497px;top:250px;width:472px;height:189px"></div>
<div class="gh" style="left:499px;top:251px;width:451px;height:23px"></div>
<div class="hl" style="left:499px;top:274px;width:451px;background:#d5d5d5"></div>
<div class="vl" style="left:533px;top:251px;height:23px;background:#e3e3e3"></div>
<div class="vl" style="left:663px;top:251px;height:23px;background:#e3e3e3"></div>
<div class="vl" style="left:793px;top:251px;height:23px;background:#e3e3e3"></div>
<div class="vl" style="left:862px;top:251px;height:23px;background:#e3e3e3"></div>
<div class="t" style="left:540px;top:257px;">Nombre de tipo</div>
<div class="t" style="left:670px;top:257px;">Marca de tipo</div>
<div class="t" style="left:800px;top:257px;">Nota clave</div>
<div class="t" style="left:868px;top:257px;">Cype_CodMed</div>
<div class="hl" style="left:499px;top:294px;width:451px;background:#c8c8c8"></div>
<div class="eq" style="left:511px;top:280px"></div>
<div class="a" style="left:534px;top:275px;width:416px;height:19px;overflow:hidden">
<div class="t" style="left:3px;top:4px">Albardilla antepecho</div><div class="t" style="left:263px;top:4px">Me.1.1</div><div class="t" style="left:334px;top:4px"></div></div>
<div class="hl" style="left:499px;top:313px;width:451px;background:#c8c8c8"></div>
<svg class="a" style="left:511px;top:298px" width="10" height="10" viewBox="0 0 10 10"><path d="M0 2.3 H10 M0 7.6 H10" stroke="#c00000" stroke-width="3"/><path d="M7.8 0.3 L2.6 9.7" stroke="#c00000" stroke-width="3"/></svg>
<div class="a" style="left:534px;top:294px;width:416px;height:19px;overflow:hidden">
<div class="t" style="left:3px;top:4px">BH20+ENF</div><div class="t" style="left:263px;top:4px">Md.1</div><div class="t" style="left:334px;top:4px"></div></div>
<div class="hl" style="left:499px;top:332px;width:451px;background:#c8c8c8"></div>
<div class="eq" style="left:511px;top:318px"></div>
<div class="a" style="left:534px;top:313px;width:416px;height:19px;overflow:hidden">
<div class="t" style="left:3px;top:4px">LCV+LCV</div><div class="t" style="left:263px;top:4px">Me.1.1</div><div class="t" style="left:334px;top:4px"></div></div>
<div class="a" style="left:499px;top:332px;width:451px;height:19px;background:#efefef;"></div>
<div class="a" style="left:534px;top:332px;width:129px;height:19px;background:#c3c3c3;"></div>
<div class="hl" style="left:499px;top:351px;width:451px;background:#c8c8c8"></div>
<div class="eq" style="left:511px;top:337px"></div>
<div class="a" style="left:534px;top:332px;width:416px;height:19px;overflow:hidden">
<div class="t" style="left:3px;top:4px">LH7 ENF</div><div class="t" style="left:263px;top:4px">FFX010</div><div class="t" style="left:334px;top:4px">FFX010</div></div>
<div class="hl" style="left:499px;top:370px;width:451px;background:#c8c8c8"></div>
<div class="eq" style="left:511px;top:356px"></div>
<div class="a" style="left:534px;top:351px;width:416px;height:19px;overflow:hidden">
<div class="t" style="left:3px;top:4px">LH7 ENF ENL</div><div class="t" style="left:263px;top:4px">Me.1.1</div><div class="t" style="left:334px;top:4px"></div></div>
<div class="hl" style="left:499px;top:389px;width:451px;background:#c8c8c8"></div>
<div class="eq" style="left:511px;top:375px"></div>
<div class="a" style="left:534px;top:370px;width:416px;height:19px;overflow:hidden">
<div class="t" style="left:3px;top:4px">LH7 ENL</div><div class="t" style="left:263px;top:4px">Me.1.1</div><div class="t" style="left:334px;top:4px">PTZ010</div></div>
<div class="hl" style="left:499px;top:408px;width:451px;background:#c8c8c8"></div>
<div class="eq" style="left:511px;top:394px"></div>
<div class="a" style="left:534px;top:389px;width:416px;height:19px;overflow:hidden">
<div class="t" style="left:3px;top:4px">LH7 ENL ALIC</div><div class="t" style="left:263px;top:4px">Me.1.1</div><div class="t" style="left:334px;top:4px"></div></div>
<div class="hl" style="left:499px;top:427px;width:451px;background:#c8c8c8"></div>
<div class="eq" style="left:511px;top:413px"></div>
<div class="a" style="left:534px;top:408px;width:416px;height:19px;overflow:hidden">
<div class="t" style="left:3px;top:4px">LH7 ENL NADA</div><div class="t" style="left:263px;top:4px">Me.1.1</div><div class="t" style="left:334px;top:4px"></div></div>
<div class="a" style="left:499px;top:427px;width:34px;height:9px;overflow:hidden"><div class="eq" style="left:12px;top:5px"></div></div>
<div class="a" style="left:534px;top:427px;width:416px;height:9px;overflow:hidden">
<div class="t" style="left:3px;top:4px">LH7:LH7 + ENF</div><div class="t" style="left:263px;top:4px">Me.1.1</div><div class="t" style="left:334px;top:4px"></div></div>
<div class="vl" style="left:533px;top:275px;height:161px;background:#c8c8c8"></div>
<div class="vl" style="left:663px;top:275px;height:161px;background:#c8c8c8"></div>
<div class="vl" style="left:793px;top:275px;height:161px;background:#c8c8c8"></div>
<div class="vl" style="left:862px;top:275px;height:161px;background:#c8c8c8"></div>
<div class="vl" style="left:950px;top:275px;height:161px;background:#c8c8c8"></div>
<div class="sb" style="left:951px;top:252px;width:16px;height:185px"></div>
<svg class="a" style="left:955px;top:259px" width="8" height="5" viewBox="0 0 8 5"><path d="M0 4.5 L4 0.3 L8 4.5Z" fill="url(#arr)"/></svg>
<svg class="a" style="left:955px;top:426px" width="8" height="5" viewBox="0 0 8 5"><path d="M0 0.5 L4 4.7 L8 0.5Z" fill="url(#arr)"/></svg>
<div class="th" style="left:951px;top:270px;width:15px;height:73px"></div>
<div class="hl" style="left:955px;top:303px;width:7px;background:#4a4a4a"></div>
<div class="hl" style="left:956px;top:304px;width:7px;background:#fafafa"></div>
<div class="hl" style="left:955px;top:306px;width:7px;background:#4a4a4a"></div>
<div class="hl" style="left:956px;top:307px;width:7px;background:#fafafa"></div>
<div class="hl" style="left:955px;top:309px;width:7px;background:#4a4a4a"></div>
<div class="hl" style="left:956px;top:310px;width:7px;background:#fafafa"></div>
<div class="dots" style="left:726px;top:445px;width:15px;height:2px"></div>
<div class="hl" style="left:493px;top:449px;width:479px;background:#a0a0a0"></div>
<svg class="a" style="left:498px;top:455px" width="13" height="14" viewBox="0 0 13 14"><path d="M0.6 0.6 H8.6 L11.6 3.6 V13.4 H0.6Z" fill="#fff"/><path d="M0.6 13.4 V0.6 H8.6" stroke="#7a7a7a" stroke-width="1.2" fill="none"/><path d="M8.6 0.6 V3.6 H11.6Z" fill="#000" stroke="#000" stroke-width="0.8"/><path d="M11.6 3.6 V13.4 H0.3" stroke="#000" stroke-width="1.3" fill="none"/><path d="M3.3 8.6 H10 M7 5.3 V12" stroke="#b8b890" stroke-width="1.2"/><path d="M2.6 8 H9.3 M6.3 4.7 V11.4" stroke="#000080" stroke-width="1.4"/></svg>
<svg class="a" style="left:520px;top:455px" width="15" height="14" viewBox="0 0 15 14"><path d="M1.6 0.6 H9.6 L12.6 3.6 V13.4 H1.6Z" fill="#fff"/><path d="M1.6 13.4 V0.6 H9.6" stroke="#7a7a7a" stroke-width="1.2" fill="none"/><path d="M9.6 0.6 V3.6 H12.6Z" fill="#000"/><path d="M12.6 3.6 V13.4 H1.3" stroke="#000" stroke-width="1.3" fill="none"/><path d="M14.3 1.2 L1.5 14" stroke="#888" stroke-width="2.8"/><path d="M13.8 0.6 L0.6 13.4" stroke="#ff0000" stroke-width="2.8"/></svg>
<div class="vl" style="left:541px;top:453px;height:18px;background:#a0a0a0"></div>
<div class="vl" style="left:542px;top:453px;height:18px;background:#fff"></div>
<svg class="a" style="left:550px;top:453px" width="17" height="15" viewBox="0 0 17 15"><defs><linearGradient id="yf" x1="0" y1="0" x2="0" y2="1"><stop offset="0" stop-color="#fff0a8"/><stop offset="1" stop-color="#f0d070"/></linearGradient></defs><rect x="0.8" y="3.3" width="13.6" height="10.4" fill="url(#yf)" stroke="#00006a" stroke-width="1.5"/><rect x="1.5" y="4" width="12.2" height="2.6" fill="#1a3ae8"/><path d="M1.5 6.8 H13.7" stroke="#00006a" stroke-width="0.8"/><path d="M9 4.5 Q11 1.5 14.5 1.8" stroke="#3a8ef0" stroke-width="2.2" fill="none"/><path d="M13 0 L16.5 1.5 L14 4.5Z" fill="#3a8ef0"/></svg>
<svg class="a" style="left:573px;top:453px" width="17" height="15" viewBox="0 0 17 15"><rect x="0.8" y="3.3" width="13.6" height="10.4" fill="url(#yf)" stroke="#00006a" stroke-width="1.5"/><rect x="1.5" y="4" width="12.2" height="2.6" fill="#1a3ae8"/><path d="M1.5 6.8 H13.7" stroke="#00006a" stroke-width="0.8"/><path d="M12.5 7 L15 10" stroke="#a08020" stroke-width="2"/><circle cx="10.5" cy="4.3" r="2.9" fill="#d8e8f8" stroke="#00006a" stroke-width="1.4"/></svg>
<div class="box" style="left:493px;top:473px;width:480px;height:81px"></div>
<div class="gh" style="left:495px;top:474px;width:476px;height:23px"></div>
<div class="hl" style="left:495px;top:497px;width:476px;background:#d5d5d5"></div>
<div class="vl" style="left:529px;top:474px;height:23px;background:#e3e3e3"></div>
<div class="vl" style="left:583px;top:474px;height:23px;background:#e3e3e3"></div>
<div class="vl" style="left:614px;top:474px;height:23px;background:#e3e3e3"></div>
<div class="t" style="left:535px;top:480px;">Código</div>
<div class="t" style="left:590px;top:480px;">Ud</div>
<div class="t" style="left:621px;top:480px;">Resumen</div>
<div class="a" style="left:495px;top:498px;width:476px;height:19px;background:#efefef;border-right:1px solid #c8c8c8"></div>
<div class="a" style="left:495px;top:498px;width:34px;height:19px;background:#c3c3c3;"></div>
<div class="hl" style="left:495px;top:517px;width:476px;background:#c8c8c8"></div>
<div class="vl" style="left:583px;top:498px;height:19px;background:#c8c8c8"></div>
<div class="vl" style="left:614px;top:498px;height:19px;background:#c8c8c8"></div>
<svg class="a" style="left:504px;top:502px" width="17" height="13" viewBox="0 0 17 13"><rect x="1.5" y="1.5" width="15" height="11" fill="#1a1a40" opacity="0.6"/><rect x="0.75" y="0.75" width="14.8" height="11" fill="url(#yw)" stroke="#000060" stroke-width="1.5"/><rect x="1.5" y="1.5" width="13.3" height="2.4" fill="url(#bw)"/><path d="M1.5 4.3 H14.8" stroke="#000060" stroke-width="0.9"/></svg>
<div class="t" style="left:533px;top:502px;">FFX010</div>
<div class="t" style="left:586px;top:502px;">m²</div>
<div class="t" style="left:618px;top:502px;">Hoja exterior en cerramiento de fachada, de 11,3 cm de espesor de fábr...</div>
<div class="dots" style="left:483px;top:556px;width:15px;height:2px"></div>
<div class="a" style="left:8px;top:560px;width:965px;height:21px;background:#3f80c7;"></div>
<div class="a" style="left:8px;top:560px;width:962px;height:21px;overflow:hidden">
<div class="t" style="left:3px;top:4px;color:#fff"><span style="letter-spacing:-0.9px">FFX010 | m² </span>Hoja exterior en cerramiento de fachada, de 11,3 cm de espesor de fábrica, de ladrillo cerámico cara vista perforado clinker, color Salmón, acabado liso, 24x11,3x5,2 cm, con junta de 1 cm, re</div>
</div>
<div class="t" style="left:11px;top:589px;">Unidad de medición:</div>
<div class="a" style="left:114px;top:585px;width:89px;height:21px;border:1px solid #b9b9b9;border-radius:3px;background:#f4f4f4"></div>
<div class="t" style="left:118px;top:589px;color:#6d6d6d">Superficie</div>
<div class="dn" style="left:191px;top:594px;border-top-color:#a0a0a0;border-left-width:4px;border-right-width:4px;border-top-width:4px"></div>
<div class="t" style="left:209px;top:589px;">Combinación utilizada:</div>
<div class="a" style="left:320px;top:584px;width:103px;height:21px;border:1px solid #707070;border-radius:3px;background:linear-gradient(#f2f2f2,#ebebeb 50%,#dddddd 51%,#cfcfcf)"></div>
<div class="t" style="left:323px;top:588px;">Área</div>
<div class="dn" style="left:410px;top:593px;border-top-color:#000"></div>
<svg class="a" style="left:431px;top:585px" width="15" height="14" viewBox="0 0 15 14"><path d="M1 0.8 H9 L12.5 4.3 V13.2 H1Z" fill="#f0f0f0" stroke="#a8a8a8" stroke-width="1.5"/><path d="M0.8 5.3 H10.5 Q14 5.3 14 8.4 Q14 11.5 10.5 11.5 H0.8Z" fill="#a8a8a8"/><path d="M1.5 6 H10.5" stroke="#c8c8c8" stroke-width="0.8"/></svg>
<svg class="a" style="left:454px;top:585px" width="13" height="14" viewBox="0 0 13 14"><path d="M0.6 0.6 H8.6 L11.6 3.6 V13.4 H0.6Z" fill="#fff"/><path d="M0.6 13.4 V0.6 H8.6" stroke="#7a7a7a" stroke-width="1.2" fill="none"/><path d="M8.6 0.6 V3.6 H11.6Z" fill="#000" stroke="#000" stroke-width="0.8"/><path d="M11.6 3.6 V13.4 H0.3" stroke="#000" stroke-width="1.3" fill="none"/><path d="M3.3 8.6 H10 M7 5.3 V12" stroke="#b8b890" stroke-width="1.2"/><path d="M2.6 8 H9.3 M6.3 4.7 V11.4" stroke="#000080" stroke-width="1.4"/></svg>
<svg class="a" style="left:476px;top:585px" width="16" height="14" viewBox="0 0 16 14"><path d="M2.8 1 H11 V13 H2.8Z" fill="#f0f0f0" stroke="#a8a8a8" stroke-width="1.5"/><path d="M14.8 0.6 L1.5 13.3" stroke="#a8a8a8" stroke-width="2.8"/></svg>
<div class="vl" style="left:497px;top:583px;height:18px;background:#a0a0a0"></div>
<div class="vl" style="left:498px;top:583px;height:18px;background:#fff"></div>
<svg class="a" style="left:506px;top:584px" width="16" height="14" viewBox="0 0 16 14"><rect x="0.9" y="3.5" width="13" height="9.5" fill="#fff" stroke="#000" stroke-width="1.6"/><rect x="1.6" y="4.2" width="11.6" height="1.8" fill="#9a9a9a"/><path d="M1.5 6.6 H13.5 M1.5 9 H13.5 M1.5 11.3 H13.5" stroke="#222" stroke-width="0.7"/><path d="M5.3 4 V12.5 M9.5 4 V12.5" stroke="#222" stroke-width="0.7"/><path d="M8.6 6.4 L14 1.2" stroke="#e8d020" stroke-width="2.4"/><path d="M8.3 6.8 L9.2 5.5" stroke="#333" stroke-width="1.2"/><path d="M13.4 1.8 L15 0.3" stroke="#e02020" stroke-width="2.4"/></svg>
<div class="t" style="left:905px;top:589px;font-weight:bold;letter-spacing:0px">18.093 m²</div>
<div class="box" style="left:8px;top:609px;width:965px;height:145px"></div>
<div class="gh" style="left:10px;top:610px;width:961px;height:23px"></div>
<div class="hl" style="left:10px;top:633px;width:961px;background:#d5d5d5"></div>
<div class="vl" style="left:361px;top:610px;height:23px;background:#e3e3e3"></div>
<div class="vl" style="left:713px;top:610px;height:23px;background:#e3e3e3"></div>
<div class="vl" style="left:766px;top:610px;height:23px;background:#e3e3e3"></div>
<div class="vl" style="left:820px;top:610px;height:23px;background:#e3e3e3"></div>
<div class="vl" style="left:864px;top:610px;height:23px;background:#e3e3e3"></div>
<div class="vl" style="left:914px;top:610px;height:23px;background:#e3e3e3"></div>
<div class="t" style="left:15px;top:616px;">Comentario</div>
<div class="t" style="left:368px;top:616px;">Comentario2</div>
<div class="t" style="left:720px;top:616px;">Id</div>
<div class="t" style="left:790px;top:616px;">A</div>
<div class="t" style="left:838px;top:616px;">B</div>
<div class="t" style="left:874px;top:616px;">Parcial</div>
<div class="t" style="left:923px;top:616px;">Subtotal</div>
<div class="a" style="left:32px;top:634px;width:939px;height:19px;background:#ccffcc;"></div>
<div class="a" style="left:32px;top:654px;width:939px;height:18px;background:#efefef;"></div>
<div class="a" style="left:32px;top:654px;width:329px;height:18px;background:#c3c3c3;"></div>
<div class="a" style="left:32px;top:711px;width:939px;height:18px;background:#ffffd0;"></div>
<div class="a" style="left:32px;top:730px;width:939px;height:18px;background:#ffffaa;"></div>
<div class="hl" style="left:10px;top:653px;width:961px;background:#c8c8c8"></div>
<div class="hl" style="left:10px;top:672px;width:961px;background:#c8c8c8"></div>
<div class="hl" style="left:10px;top:691px;width:961px;background:#c8c8c8"></div>
<div class="hl" style="left:10px;top:710px;width:961px;background:#c8c8c8"></div>
<div class="hl" style="left:10px;top:729px;width:961px;background:#c8c8c8"></div>
<div class="hl" style="left:10px;top:748px;width:961px;background:#c8c8c8"></div>
<div class="vl" style="left:361px;top:634px;height:114px;background:#c8c8c8"></div>
<div class="vl" style="left:713px;top:634px;height:114px;background:#c8c8c8"></div>
<div class="vl" style="left:766px;top:634px;height:114px;background:#c8c8c8"></div>
<div class="vl" style="left:820px;top:634px;height:114px;background:#c8c8c8"></div>
<div class="vl" style="left:864px;top:634px;height:114px;background:#c8c8c8"></div>
<div class="vl" style="left:914px;top:634px;height:114px;background:#c8c8c8"></div>
<div class="vl" style="left:970px;top:634px;height:114px;background:#c8c8c8"></div>
<div class="t" style="left:33px;top:638px;">Muros</div>
<div class="t r" style="left:697px;width:120px;top:638px;">Nº Uds.</div>
<div class="t r" style="left:741px;width:120px;top:638px;">Área</div>
<div class="eq" style="left:16px;top:658px"></div>
<div class="t" style="left:33px;top:657px;">Muro básico LH7 ENF</div>
<div class="t" style="left:365px;top:657px;">-01 Sótano Nueva construcción LH7</div>
<div class="t" style="left:717px;top:657px;">126675</div>
<div class="t r" style="left:697px;width:120px;top:657px;">1,000</div>
<div class="t r" style="left:741px;width:120px;top:657px;">8,319</div>
<div class="t r" style="left:791px;width:120px;top:657px;">8,319</div>
<div class="eq" style="left:16px;top:677px"></div>
<div class="t" style="left:33px;top:676px;">Muro básico LH7 ENF</div>
<div class="t" style="left:365px;top:676px;">01 P1 Nueva construcción LH7</div>
<div class="t" style="left:717px;top:676px;">128495</div>
<div class="t r" style="left:697px;width:120px;top:676px;">1,000</div>
<div class="t r" style="left:741px;width:120px;top:676px;">4,288</div>
<div class="t r" style="left:791px;width:120px;top:676px;">4,288</div>
<div class="eq" style="left:16px;top:696px"></div>
<div class="t" style="left:33px;top:695px;">Muro básico LH7 ENF</div>
<div class="t" style="left:365px;top:695px;">01 P1 Nueva construcción LH7</div>
<div class="t" style="left:717px;top:695px;">129758</div>
<div class="t r" style="left:697px;width:120px;top:695px;">1,000</div>
<div class="t r" style="left:741px;width:120px;top:695px;">5,486</div>
<div class="t r" style="left:791px;width:120px;top:695px;">5,486</div>
<div class="t r" style="left:791px;width:120px;top:714px;color:#1a1a8a">18,093</div>
<div class="t r" style="left:847px;width:120px;top:714px;color:#1a1a8a">18,093</div>
<div class="t r" style="left:791px;width:120px;top:733px;color:#ff0000">18,093</div>
<div class="t r" style="left:847px;width:120px;top:733px;color:#ff0000">18,093</div>
<div class="a" style="left:9px;top:754px;width:964px;height:30px;background:#e3e3e3;border-top:1px solid #fafafa"></div>
<div class="btn" style="left:12px;top:760px;width:55px;height:20px"></div>
<div class="t" style="left:21px;top:763px;">Aceptar</div>
<div class="btn" style="left:393px;top:760px;width:50px;height:20px"></div>
<div class="t" style="left:402px;top:763px;">Aplicar</div>
<div class="btn" style="left:451px;top:760px;width:139px;height:20px"></div>
<div class="t" style="left:460px;top:763px;">Extracción de mediciones</div>
<div class="btn" style="left:912px;top:757px;width:60px;height:26px"></div>
<div class="t" style="left:921px;top:763px;">Cancelar</div>
</body></html>
